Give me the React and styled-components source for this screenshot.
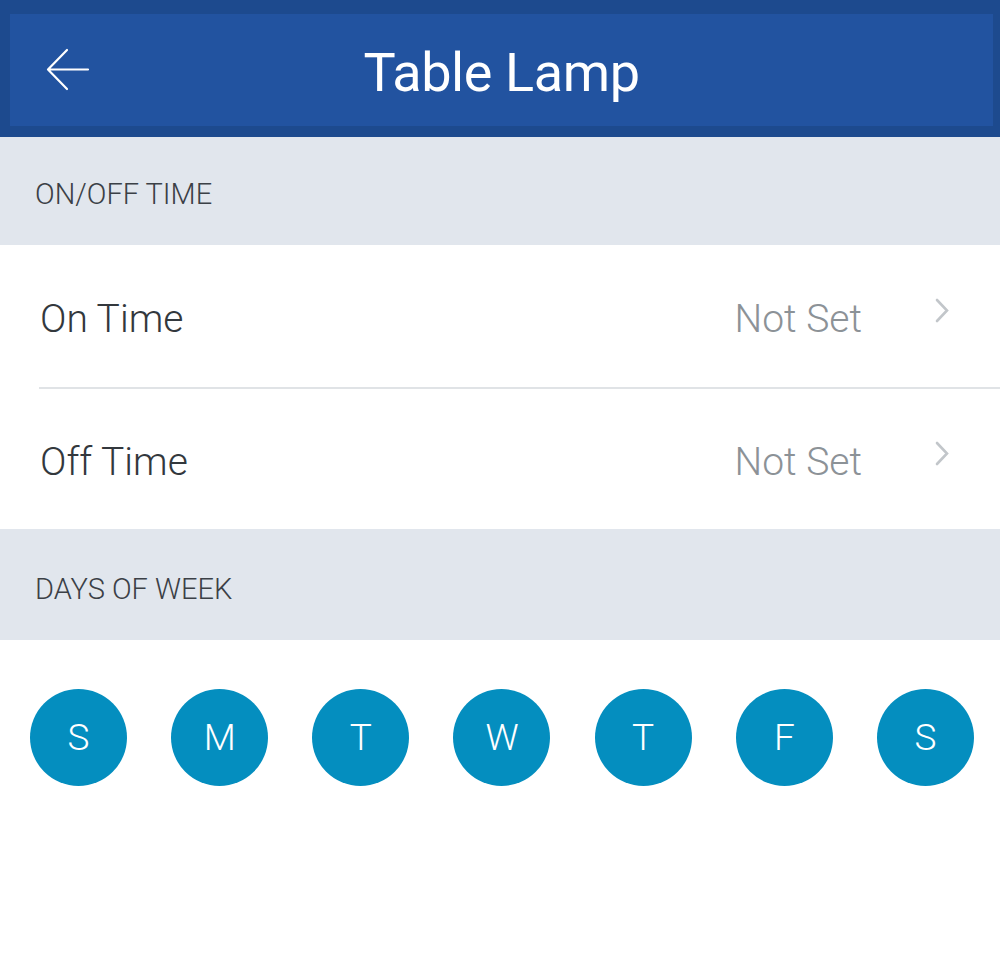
import React from "react";
import styled, { createGlobalStyle } from "styled-components";

const GlobalStyle = createGlobalStyle`
  body {
    margin: 0;
    background: #ffffff;
    font-family: Roboto, "Liberation Sans", sans-serif;
  }
`;

const days = ["S", "M", "T", "W", "T", "F", "S"];

const rows = [
  { label: "On Time", value: "Not Set" },
  { label: "Off Time", value: "Not Set" },
];

function BackArrow() {
  return (
    <svg width="44" height="44" viewBox="0 0 44 44" fill="none">
      <path
        d="M42 21.5H3M21 2L2 21.5L21 41"
        stroke="#ffffff"
        strokeWidth="2.2"
        strokeLinecap="round"
        strokeLinejoin="round"
      />
    </svg>
  );
}

function Chevron() {
  return (
    <svg width="16" height="26" viewBox="0 0 16 26" fill="none">
      <path d="M3 2L13 12.5L3 23" stroke="#c2c6ca" strokeWidth="2.6" strokeLinecap="round" />
    </svg>
  );
}

export default function App() {
  return (
    <Page>
      <GlobalStyle />
      <Header>
        <HeaderInner>
          <BackButton>
            <BackArrow />
          </BackButton>
          <Title>Table Lamp</Title>
        </HeaderInner>
      </Header>

      <SectionHead>ON/OFF TIME</SectionHead>
      {rows.map((r, i) => (
        <Row key={r.label} last={i === rows.length - 1}>
          <RowLabel>{r.label}</RowLabel>
          <RowValue>{r.value}</RowValue>
          <ChevronWrap>
            <Chevron />
          </ChevronWrap>
        </Row>
      ))}

      <SectionHead tall>DAYS OF WEEK</SectionHead>
      <Days>
        {days.map((d, i) => (
          <Day key={i}>{d}</Day>
        ))}
      </Days>
    </Page>
  );
}

const Page = styled.div`
  width: 1000px;
  height: 957px;
  background: #ffffff;
  overflow: hidden;
`;

const Header = styled.header`
  height: 137px;
  box-sizing: border-box;
  padding: 14px 7px 11px 10px;
  background: #1d4a8e;
`;

const HeaderInner = styled.div`
  height: 100%;
  position: relative;
  display: flex;
  align-items: center;
  justify-content: center;
  background: #2253a0;
`;

const BackButton = styled.div`
  position: absolute;
  left: 36px;
  top: 34px;
  display: flex;
`;

const Title = styled.h1`
  margin: 4px 0 0 0;
  color: #ffffff;
  font-weight: 400;
  font-size: 54px;
  letter-spacing: -0.4px;
`;

const SectionHead = styled.div`
  height: ${(p) => (p.tall ? 111 : 108)}px;
  box-sizing: border-box;
  display: flex;
  align-items: center;
  padding: ${(p) => (p.tall ? 9 : 6)}px 35px 0;
  background: #e1e6ed;
  color: #3b4046;
  font-size: 29px;
  font-weight: 300;
`;

const Row = styled.div`
  height: ${(p) => (p.last ? 140 : 144)}px;
  box-sizing: border-box;
  display: flex;
  align-items: center;
  padding: 6px 50px 0 ${(p) => (p.last ? 40 : 1)}px;
  border-bottom: ${(p) => (p.last ? "none" : "2px solid #e0e3e6")};
  margin-left: ${(p) => (p.last ? 0 : 39)}px;
`;

const RowLabel = styled.span`
  flex: 1;
  font-size: 39px;
  font-weight: 300;
  color: #33383d;
`;

const RowValue = styled.span`
  font-size: 39px;
  font-weight: 300;
  color: #8c9297;
  margin-right: 72px;
`;

const ChevronWrap = styled.span`
  display: flex;
  margin-top: -16px;
`;

const Days = styled.div`
  display: flex;
  justify-content: space-between;
  padding: 49px 26px 0 30px;
`;

const Day = styled.div`
  width: 97px;
  height: 97px;
  border-radius: 50%;
  background: #048ebf;
  color: #ffffff;
  display: flex;
  align-items: center;
  justify-content: center;
  font-size: 37px;
  font-weight: 300;
`;
